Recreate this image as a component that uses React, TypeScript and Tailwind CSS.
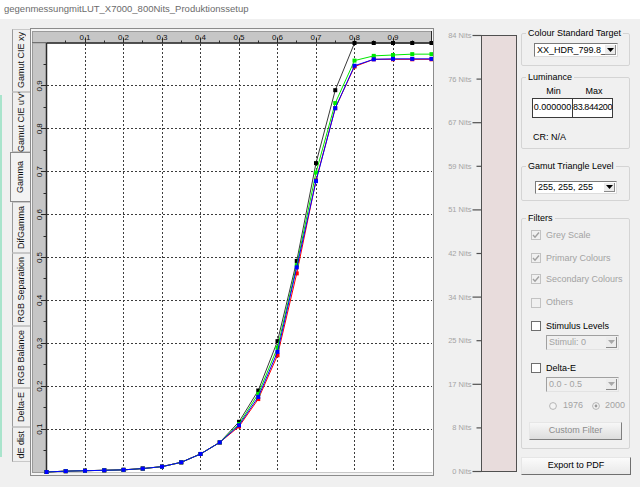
import React from 'react';

const FONT = "'Liberation Sans', Arial, sans-serif";

const TABS = [
  { label: 'Gamut CIE xy', h: 'h-[63px]' },
  { label: "Gamut CIE u'v'", h: 'h-[60px]' },
  { label: 'Gamma', h: 'h-[50px]', active: true },
  { label: 'DifGamma', h: 'h-[51px]' },
  { label: 'RGB Separation', h: 'h-[73px]' },
  { label: 'RGB Balance', h: 'h-[62px]' },
  { label: 'Delta-E', h: 'h-[39px]' },
  { label: 'dE dist', h: 'h-[35px]' },
];

// plot mapping (svg local coords)
const X = (v: number) => 15.5 + v * 385;
const Y = (v: number) => 443 - v * 429;
const px = (n: number) => Math.floor(n) + 0.5;
const TENTHS = [0.1, 0.2, 0.3, 0.4, 0.5, 0.6, 0.7, 0.8, 0.9];
const TWENTIETHS = Array.from({ length: 19 }, (_, i) => (i + 1) / 20);

const LOW = [0, 0.002, 0.003, 0.004, 0.005, 0.008, 0.0125, 0.0226, 0.042, 0.069];
const SERIES = [
  { line: '#3a3a3a', dot: '#000000', hi: [0.117, 0.19, 0.305, 0.492, 0.72, 0.89, 1, 1, 1, 1, 1] },
  { line: '#ff0000', dot: '#ff0000', hi: [0.106, 0.17, 0.272, 0.463, 0.68, 0.848, 0.945, 0.962, 0.962, 0.962, 0.962] },
  { line: '#00e800', dot: '#00e800', hi: [0.112, 0.182, 0.29, 0.482, 0.698, 0.86, 0.959, 0.97, 0.972, 0.974, 0.974] },
  { line: '#0000ff', dot: '#0000ff', hi: [0.109, 0.175, 0.28, 0.477, 0.678, 0.848, 0.947, 0.962, 0.963, 0.963, 0.963] },
];

const NITS = ['84', '76', '67', '59', '51', '42', '34', '25', '17', '8', '0'];

function GammaChart() {
  return (
    <svg width={402} height={446} className="block" fontFamily={FONT}>
      <rect x={0} y={0} width={402} height={446} fill="#f4f4f4" />
      <rect x={15.5} y={14} width={386.5} height={429} fill="#ffffff" />
      <line x1={15.5} x2={401} y1={443.5} y2={443.5} stroke="#c8c8c8" />

      {/* grid */}
      {TENTHS.map((t) => (
        <line key={'gv' + t} x1={px(X(t))} x2={px(X(t))} y1={15} y2={443} stroke="#3c3c3c" strokeDasharray="2 2" />
      ))}
      {TENTHS.map((t) => (
        <line key={'gh' + t} x1={16} x2={401} y1={px(Y(t))} y2={px(Y(t))} stroke="#3c3c3c" strokeDasharray="2 2" />
      ))}

      {/* top axis strip */}
      <rect x={1.5} y={2.5} width={399} height={11.5} fill="#c6c6c6" stroke="#9a9a9a" />
      <line x1={1} x2={401} y1={14} y2={14} stroke="#2a2a2a" strokeWidth={1.5} />
      <line x1={400.5} x2={400.5} y1={2} y2={14} stroke="#2a2a2a" />
      {TWENTIETHS.map((t, i) => (
        <line key={'tt' + t} x1={px(X(t))} x2={px(X(t))} y1={14} y2={i % 2 === 1 ? 8.5 : 11.5} stroke="#2a2a2a" />
      ))}
      {TENTHS.map((t) => (
        <text key={'tl' + t} x={X(t)} y={10.5} fontSize={8} textAnchor="middle" fill="#111">
          {t.toFixed(1)}
        </text>
      ))}

      {/* left axis strip */}
      <rect x={1.5} y={14} width={14} height={429.5} fill="#c6c6c6" stroke="#9a9a9a" />
      <line x1={15.5} x2={15.5} y1={14} y2={443.5} stroke="#2a2a2a" strokeWidth={1.5} />
      {TWENTIETHS.map((t, i) => (
        <line key={'lt' + t} x1={15.5} x2={i % 2 === 1 ? 10 : 12.5} y1={px(Y(t))} y2={px(Y(t))} stroke="#2a2a2a" />
      ))}
      {TENTHS.map((t) => (
        <text
          key={'ll' + t}
          transform={`translate(10.5 ${Y(t)}) rotate(-90)`}
          fontSize={8}
          textAnchor="middle"
          fill="#111"
        >
          {t.toFixed(1)}
        </text>
      ))}

      {/* curves */}
      {SERIES.map((s, si) => {
        const vals = [...LOW, ...s.hi];
        const pts = vals.map((v, i) => [X(i * 0.05), Y(v)]);
        return (
          <g key={si}>
            <polyline points={pts.map((p) => p.join(',')).join(' ')} fill="none" stroke={s.line} strokeWidth={1} />
            {pts.map(([x, y], i) => (
              <rect key={i} x={x - 2} y={y - 2} width={4} height={4} fill={s.dot} />
            ))}
          </g>
        );
      })}
    </svg>
  );
}

function NitsScale() {
  return (
    <svg width={83} height={448} className="block shrink-0" fontFamily={FONT}>
      <rect x={47.5} y={7.5} width={35} height={436} fill="#e8dcdc" stroke="#505050" />
      {NITS.map((n, i) => {
        const y = 7.5 + i * 43.6;
        return (
          <g key={n}>
            <line x1={i % 2 === 0 ? 38.5 : 42.5} x2={47.5} y1={y} y2={y} stroke="#505050" strokeWidth={1.2} />
            <text x={37.5} y={y + 2.5} fontSize={7.5} textAnchor="end" fill="#a4a4a4">
              {n} Nits
            </text>
          </g>
        );
      })}
    </svg>
  );
}

function Arrow({ color }: { color: string }) {
  return (
    <svg width="7" height="4" viewBox="0 0 7 4">
      <path d="M0 0h7L3.5 4z" fill={color} />
    </svg>
  );
}

function Combo({ text, box, disabled = false }: { text: string; box: string; disabled?: boolean }) {
  return (
    <div
      className={`${box} flex border-t border-l border-b border-r ${
        disabled
          ? 'bg-[#f0f0f0] text-[#a3a3a3] border-t-[#a0a0a0] border-l-[#a0a0a0] border-b-[#e3e3e3] border-r-[#e3e3e3]'
          : 'bg-white text-black border-t-[#7a7a7a] border-l-[#7a7a7a] border-b-[#dcdcdc] border-r-[#dcdcdc]'
      }`}
    >
      <div className="flex-1 overflow-hidden whitespace-nowrap pl-[2px] flex items-center leading-none">{text}</div>
      <div className="w-[11px] my-[1px] mr-[1px] flex items-center justify-center bg-[#ececec] border-r border-b border-r-[#8a8a8a] border-b-[#8a8a8a]">
        <Arrow color={disabled ? '#a8a8a8' : '#000000'} />
      </div>
    </div>
  );
}

function Check({ label, checked = false, disabled = false, mt }: { label: string; checked?: boolean; disabled?: boolean; mt: string }) {
  return (
    <div className={`${mt} flex items-center h-[13px] ml-[5px]`}>
      <div
        className={`w-[10px] h-[10px] border flex items-center justify-center ${
          disabled ? 'border-[#c2c2c2] bg-[#f0f0f0]' : 'border-[#6e6e6e] bg-white'
        }`}
      >
        {checked && (
          <svg width="8" height="8" viewBox="0 0 8 8">
            <path d="M1 4l2 2.2L7 1.5" stroke={disabled ? '#a0a0a0' : '#000'} strokeWidth="1.4" fill="none" />
          </svg>
        )}
      </div>
      <span className={`ml-[5px] leading-none ${disabled ? 'text-[#a3a3a3]' : 'text-black'}`}>{label}</span>
    </div>
  );
}

function Radio({ on = false }: { on?: boolean }) {
  return (
    <svg width="8" height="8" viewBox="0 0 8 8" className="shrink-0">
      <circle cx="4" cy="4" r="3.4" fill="#f4f4f4" stroke="#b4b4b4" strokeWidth="1" />
      {on && <circle cx="4" cy="4" r="1.4" fill="#9a9a9a" />}
    </svg>
  );
}

function Legend({ children }: { children: React.ReactNode }) {
  return <legend className="px-[2px] leading-[11px]">{children}</legend>;
}

function RightPanel() {
  return (
    <div className="w-[110px] shrink-0 text-[9px]">
      <fieldset className="w-[109px] border border-[#d4d4d4] rounded-[2px] px-[4px] pb-[8px]">
        <Legend>Colour Standard Target</Legend>
        <Combo text="XX_HDR_799.8_Nits" box="mt-[4px] ml-[8px] w-[84px] h-[14px]" />
      </fieldset>

      <fieldset className="mt-[6px] w-[109px] border border-[#d4d4d4] rounded-[2px] px-[4px] pb-[5.5px]">
        <Legend>Luminance</Legend>
        <div className="mt-[2.5px] ml-[6px] w-[81px] flex h-[11px] leading-[11px]">
          <div className="w-[43px] text-center">Min</div>
          <div className="flex-1 text-center">Max</div>
        </div>
        <div className="mt-[1.5px] ml-[6px] w-[81px] h-[20px] flex border border-[#3a3a3a] bg-white">
          <div className="w-[42px] border-r border-[#3a3a3a] flex items-center justify-center">0.000000</div>
          <div className="flex-1 flex items-center justify-center tracking-[-0.4px]">83.844200</div>
        </div>
        <div className="mt-[13.5px] ml-[7px] h-[11px] leading-[11px]">CR: N/A</div>
      </fieldset>

      <fieldset className="mt-[12px] w-[109px] border border-[#d4d4d4] rounded-[2px] px-[4px] pb-[6px]">
        <Legend>Gamut Triangle Level</Legend>
        <Combo text="255, 255, 255" box="mt-[9px] ml-[9px] w-[82px] h-[13px]" />
      </fieldset>

      <fieldset className="mt-[12px] w-[109px] border border-[#d4d4d4] rounded-[2px] px-[4px] pb-[8px]">
        <Legend>Filters</Legend>
        <Check mt="mt-[4.5px]" label="Grey Scale" checked disabled />
        <Check mt="mt-[10px]" label="Primary Colours" checked disabled />
        <Check mt="mt-[8px]" label="Secondary Colours" checked disabled />
        <Check mt="mt-[10.5px]" label="Others" disabled />
        <Check mt="mt-[10.5px]" label="Stimulus Levels" />
        <Combo text="Stimuli: 0" box="mt-[2.5px] ml-[20px] w-[73px] h-[15px]" disabled />
        <Check mt="mt-[11.5px]" label="Delta-E" />
        <Combo text="0.0 - 0.5" box="mt-[2.5px] ml-[20px] w-[73px] h-[15px]" disabled />
        <div className="mt-[8.5px] ml-[23px] h-[11px] flex items-center text-[#a3a3a3]">
          <Radio />
          <span className="ml-[6px]">1976</span>
          <span className="ml-[9px] flex items-center">
            <Radio on />
          </span>
          <span className="ml-[5px]">2000</span>
        </div>
        <div className="mt-[10.5px] ml-[3px] w-[93px] h-[18px] flex items-center justify-center text-[#8c8c8c] bg-linear-to-b from-[#f7f7f7] to-[#dddddd] border border-t-[#e6e6e6] border-l-[#e6e6e6] border-r-[#7f7f7f] border-b-[#7f7f7f]">
          Custom Filter
        </div>
      </fieldset>

      <div className="mt-[8px] w-[110px] h-[18px] flex items-center justify-center text-black bg-linear-to-b from-[#fbfbfb] to-[#e9e9e9] border border-t-[#e6e6e6] border-l-[#e6e6e6] border-r-[#6f6f6f] border-b-[#6f6f6f]">
        Export to PDF
      </div>
    </div>
  );
}

function SideTabs() {
  return (
    <div className="w-[30px] shrink-0 flex">
      <div className="w-[2px] mt-[67px] h-[362px] bg-[#a9e4cc]" />
      <div className="ml-[8px] w-[20px] pt-[1px] flex flex-col">
        {TABS.map((t) => (
          <div
            key={t.label}
            className={`${t.h} flex items-center justify-center border-l border-t border-b ${
              t.active
                ? 'w-[20px] border-[#8a8a8a] bg-[#f3f3f3]'
                : 'ml-[2px] w-[18px] border-l-[#9a9a9a] border-t-[#c8c8c8] border-b-[#c8c8c8] bg-[#f0f0f0]'
            }`}
          >
            <span className="[writing-mode:vertical-rl] rotate-180 whitespace-nowrap text-[9px] leading-none text-[#111]">
              {t.label}
            </span>
          </div>
        ))}
      </div>
    </div>
  );
}

export default function App() {
  return (
    <div className="w-[640px] h-[487px] overflow-hidden bg-[#f0f0f0] text-black" style={{ fontFamily: FONT }}>
      <div className="h-[19px] bg-white pl-[4px] flex items-center text-[9.5px] text-[#6b6b6b]">
        gegenmessungmitLUT_X7000_800Nits_Produktionssetup
      </div>
      <div className="flex items-start pt-[9px]">
        <SideTabs />
        <div className="w-[404px] h-[448px] shrink-0 border border-[#8c8c8c] bg-white">
          <GammaChart />
        </div>
        <NitsScale />
        <div className="w-[4px] shrink-0" />
        <RightPanel />
      </div>
    </div>
  );
}
